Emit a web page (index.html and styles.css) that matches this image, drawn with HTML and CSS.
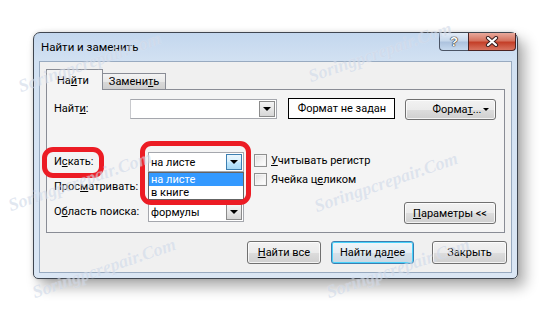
FILE: index.html
```html
<!DOCTYPE html>
<html lang="ru">
<head>
  <meta charset="UTF-8">
  <meta name="viewport" content="width=device-width, initial-scale=1.0">
  <title>Найти и заменить</title>
  <link rel="stylesheet" href="styles.css">
</head>
<body>
  <div class="dialog">
    <div class="titlebar">
      <div class="title">Найти и заменить</div>
      <div class="caption">
        <span class="cap help">?</span>
        <span class="cap close">
          <svg width="14" height="11" viewBox="0 0 14 11">
            <path d="M3 2 L11 9 M11 2 L3 9" stroke="#3a2020" stroke-width="4.2" stroke-linecap="round"/>
            <path d="M3 2 L11 9 M11 2 L3 9" stroke="#fff" stroke-width="2.2" stroke-linecap="round"/>
          </svg>
        </span>
      </div>
    </div>

    <div class="client">
      <div class="tabs">
        <div class="tab active">На<u>й</u>ти</div>
        <div class="tab">Замени<u>т</u>ь</div>
      </div>

      <div class="panel">
        <div class="row-find">
          <span class="lbl find-lbl">Найт<u>и</u>:</span>
          <div class="field"><span class="arrow"></span></div>
          <div class="fmt-box">Формат не задан</div>
          <div class="btn fmt-btn"><span>Форма<u>т</u>...</span><span class="caret"></span></div>
        </div>

        <div class="options">
          <div class="opt-grid">
            <span class="lbl">И<u>с</u>кать:</span>
            <div class="combo"><span>на листе</span><span class="arrow hot"></span></div>
            <span class="lbl">Прос<u>м</u>атривать:</span>
            <!-- covered by the open list -->
            <div class="combo"><span></span><span class="arrow"></span></div>
            <span class="lbl">О<u>б</u>ласть поиска:</span>
            <div class="combo"><span>формулы</span><span class="arrow"></span></div>
          </div>
          <div class="checks">
            <div class="check"><span class="box"></span><span><u>У</u>читывать регистр</span></div>
            <div class="check"><span class="box"></span><span>Ячейка ц<u>е</u>ликом</span></div>
          </div>
          <div class="btn params"><u>П</u>араметры &lt;&lt;</div>
        </div>

        <!-- open list of the "Искать" combo -->
        <ul class="droplist">
          <li class="sel">на листе</li>
          <li>в книге</li>
        </ul>

        <!-- red highlight frames -->
        <div class="mark mark-label"></div>
        <div class="mark mark-combo"></div>
      </div>

      <div class="actions">
        <div class="btn find-all"><span><u>Н</u>айти все</span></div>
        <div class="btn find-next default"><span>Найти да<u>л</u>ее</span></div>
        <div class="btn close-btn">Закрыть</div>
      </div>
    </div>
  </div>

  <span class="wm w1">Soringpcrepair.Com</span>
  <span class="wm w2">Soringpcrepair.Com</span>
  <span class="wm w3">Soringpcrepair.Com</span>
  <span class="wm w4">Soringpcrepair.Com</span>
  <span class="wm w5">Soringpcrepair.Com</span>
  <span class="wm w6">Soringpcrepair.Com</span>
</body>
</html>
```

FILE: styles.css
```css
/* Basic Reset */
* {
  margin: 0;
  padding: 0;
  box-sizing: border-box;
}
body {
  font-family: Roboto, 'Liberation Sans', sans-serif;
  font-size: 11px;
  color: #000;
  background: #fff;
  width: 553px;
  height: 313px;
  overflow: hidden;
  position: relative;
}
u {
  text-decoration: underline;
  text-underline-offset: 1px;
}

/* window frame */
.dialog {
  width: 485px;
  height: 247px;
  margin: 32px 0 0 33px;
  border: 1px solid #3f4650;
  border-radius: 7px 7px 5px 5px;
  background: linear-gradient(to bottom, #c3d7ee 0, #d2e1f2 28px, #dae6f4 100%);
  box-shadow: 7px 8px 14px rgba(0, 0, 0, 0.32), 0 0 4px rgba(0, 0, 0, 0.15);
}
.titlebar {
  height: 28px;
  display: flex;
  align-items: flex-start;
}
.title {
  padding: 7px 0 0 7px;
  line-height: 15px;
  font-size: 11.5px;
}
.caption {
  margin-left: auto;
  margin-right: 1px;
  display: flex;
  height: 18px;
}
.cap {
  height: 18px;
  display: flex;
  align-items: center;
  justify-content: center;
  border: 1px solid #4b5566;
  border-top: none;
}
.help {
  width: 29px;
  border-right: none;
  border-radius: 0 0 0 4px;
  background: linear-gradient(to bottom, #e3ecf7 0%, #c7d8eb 45%, #adc3de 55%, #c6d9ee 100%);
  color: #fff;
  font: bold 13px 'Liberation Sans', sans-serif;
  text-shadow: 0 0 1px #222, 0 0 1px #222, 0 0 1px #222;
}
.close {
  width: 48px;
  border-radius: 0 0 4px 0;
  border-color: #4a2222;
  background: linear-gradient(to bottom, #e8a99c 0%, #d5735f 45%, #c43f28 55%, #d8735f 100%);
}

/* client area */
.client {
  height: 212px;
  margin: 0 5px;
  border: 1px solid #98aac0;
  background: #f0f0f0;
  padding: 7px 6px 0 6px;
}
.tabs {
  display: flex;
  align-items: flex-end;
  height: 20px;
}
.tab {
  height: 16px;
  padding: 0 6px;
  line-height: 15px;
  border: 1px solid #898c95;
  border-bottom: none;
  border-left: none;
  background: linear-gradient(to bottom, #f3f3f3 0%, #e8e8e8 50%, #d9d9d9 51%, #cfcfcf 100%);
}
.tab.active {
  position: relative;
  z-index: 2;
  height: 21px;
  margin-bottom: -1px;
  padding: 3px 13px 0 10px;
  border-left: 1px solid #898c95;
  background: #f4f4f4;
  line-height: 16px;
}
.panel {
  position: relative;
  height: 144px;
  border: 1px solid #898c95;
  background: #f4f4f4;
  padding: 9px 8px 0 7px;
}
.lbl {
  white-space: nowrap;
  line-height: 20px;
}

/* first row */
.row-find {
  display: flex;
  align-items: center;
  height: 20px;
}
.find-lbl {
  width: 77px;
}
.field {
  width: 148px;
  height: 20px;
  border: 1px solid #a5a7ad;
  border-left-color: #c8c9cd;
  background: #fff;
  display: flex;
  justify-content: flex-end;
  padding: 1px;
}
.fmt-box {
  width: 108px;
  height: 21px;
  margin-left: 11px;
  margin-top: -2px;
  border: 1px solid #000;
  background: #fff;
  text-align: center;
  line-height: 19px;
}
.fmt-btn {
  width: 91px;
  height: 21px;
  margin-left: 10px;
  justify-content: flex-start;
  padding-left: 26px;
}
.caret {
  margin-left: auto;
  margin-right: 6px;
  width: 0;
  height: 0;
  border-left: 3px solid transparent;
  border-right: 3px solid transparent;
  border-top: 3px solid #000;
}

/* dropdown arrow square */
.arrow {
  width: 16px;
  height: 16px;
  border: 1px solid #8b8b8b;
  background: linear-gradient(to bottom, #f4f4f4 0%, #e6e6e6 50%, #d6d6d6 100%);
  display: flex;
  align-items: center;
  justify-content: center;
  flex: none;
}
.arrow::after {
  content: '';
  width: 0;
  height: 0;
  border-left: 4px solid transparent;
  border-right: 4px solid transparent;
  border-top: 4px solid #000;
}
.arrow.hot {
  border-color: #3c7fb1;
  background: linear-gradient(to bottom, #eaf6fd 0%, #d9f0fc 45%, #bee6fd 55%, #a7d9f5 100%);
}

/* lower options */
.options {
  display: flex;
  margin-top: 33px;
}
.opt-grid {
  display: grid;
  grid-template-columns: 94px 96px;
  grid-auto-rows: 20px;
  row-gap: 5px;
}
.combo {
  height: 20px;
  border: 1px solid #a5a7ad;
  background: #fff;
  display: flex;
  align-items: center;
  justify-content: space-between;
  padding: 1px 1px 1px 2px;
}
.checks {
  margin-left: 10px;
  margin-top: -1px;
}
.check {
  display: flex;
  align-items: center;
  height: 19px;
  white-space: nowrap;
}
.box {
  width: 13px;
  height: 13px;
  margin-right: 4px;
  border: 1px solid #8e8f8f;
  background: linear-gradient(135deg, #dcdcdc 0%, #f4f4f4 60%, #fff 100%);
  box-shadow: inset 0 0 0 1px #f4f4f4;
}
.params {
  width: 92px;
  height: 22px;
  margin-left: auto;
  align-self: flex-end;
  margin-bottom: -2px;
}

/* buttons */
.btn {
  display: flex;
  align-items: center;
  justify-content: center;
  border: 1px solid #707070;
  border-radius: 3px;
  background: linear-gradient(to bottom, #f2f2f2 0%, #ebebeb 50%, #dddddd 51%, #cfcfcf 100%);
  box-shadow: inset 0 0 0 1px rgba(255, 255, 255, 0.75);
  white-space: nowrap;
}
.btn.default {
  border-color: #3c7fb1;
  box-shadow: inset 0 0 0 1px #48d2fb;
  background: linear-gradient(to bottom, #f0f6fa 0%, #e5edf3 50%, #d6e1ea 51%, #cbd8e2 100%);
}
.actions {
  display: flex;
  justify-content: flex-end;
  margin: 8px -2px 0 0;
}
.actions .btn {
  height: 23px;
}
.find-all {
  width: 74px;
}
.find-next {
  width: 83px;
  margin-left: 10px;
}
.close-btn {
  width: 75px;
  margin-left: 18px;
}

/* open list */
.droplist {
  position: absolute;
  left: 101px;
  top: 82px;
  width: 96px;
  list-style: none;
  border: 1px solid #646464;
  background: #fff;
  z-index: 3;
}
.droplist li {
  height: 13px;
  line-height: 13px;
  padding-left: 2px;
}
.droplist li.sel {
  background: #3399ff;
  color: #fff;
}

/* red highlight */
.mark {
  position: absolute;
  border: 5px solid #ec1c24;
  border-radius: 11px;
  z-index: 4;
}
.mark-label {
  left: -5px;
  top: 57px;
  width: 62px;
  height: 31px;
}
.mark-combo {
  left: 93px;
  top: 51px;
  width: 111px;
  height: 64px;
}

/* watermark */
.wm {
  position: absolute;
  font: italic bold 18px 'Liberation Serif', serif;
  color: rgba(170, 186, 214, 0.34);
  text-shadow: 0 0 1px rgba(255, 255, 255, 0.5);
  transform: rotate(-19deg);
  transform-origin: 0 100%;
  line-height: 20px;
  white-space: nowrap;
  z-index: 10;
  pointer-events: none;
}
.w1 { left: 22px; top: 76px; }
.w2 { left: 312px; top: 66px; }
.w3 { left: 12px; top: 195px; }
.w4 { left: 318px; top: 196px; }
.w5 { left: 36px; top: 282px; }
.w6 { left: 330px; top: 282px; }
```
